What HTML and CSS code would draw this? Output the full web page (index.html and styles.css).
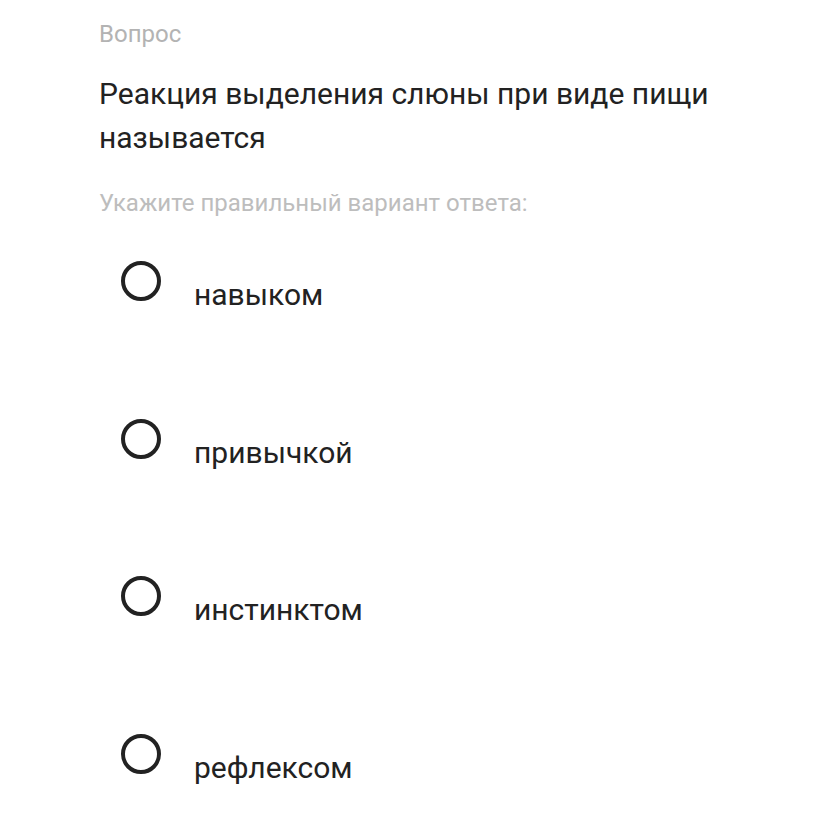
FILE: index.html
```html
<!DOCTYPE html>
<html lang="ru">
<head>
<meta charset="utf-8">
<link rel="stylesheet" href="styles.css">
</head>
<body>
<main class="page">
  <div class="label">Вопрос</div>
  <div class="question">Реакция выделения слюны при виде пищи называется</div>
  <div class="hint">Укажите правильный вариант ответа:</div>
  <ul class="options">
    <li class="option"><span class="radio"></span><span class="opt-text">навыком</span></li>
    <li class="option"><span class="radio"></span><span class="opt-text">привычкой</span></li>
    <li class="option"><span class="radio"></span><span class="opt-text">инстинктом</span></li>
    <li class="option"><span class="radio"></span><span class="opt-text">рефлексом</span></li>
  </ul>
</main>
</body>
</html>
```

FILE: styles.css
```css
html, body {
  margin: 0;
  padding: 0;
  background: #ffffff;
}
body {
  font-family: Roboto, "Noto Sans", sans-serif;
  width: 828px;
  height: 828px;
  overflow: hidden;
}
.page {
  padding: 19px 0 0 99px;
}
.label {
  font-size: 24px;
  line-height: 30px;
  color: #b3b3b3;
}
.question {
  margin-top: 23px;
  width: 660px;
  font-size: 30px;
  line-height: 44px;
  color: #222222;
}
.hint {
  margin-top: 28px;
  font-size: 24px;
  line-height: 30px;
  color: #bdbdbd;
}
.options {
  list-style: none;
  margin: 43px 0 0 0;
  padding: 0 0 0 22px;
}
.option {
  display: flex;
  align-items: flex-start;
  height: 157.5px;
}
.option:last-child {
  height: auto;
}
.radio {
  box-sizing: border-box;
  width: 40px;
  height: 40px;
  border: 4px solid #222222;
  border-radius: 50%;
  flex: none;
}
.opt-text {
  margin-left: 33px;
  margin-top: 17px;
  font-size: 30px;
  line-height: 34px;
  color: #222222;
}
```
